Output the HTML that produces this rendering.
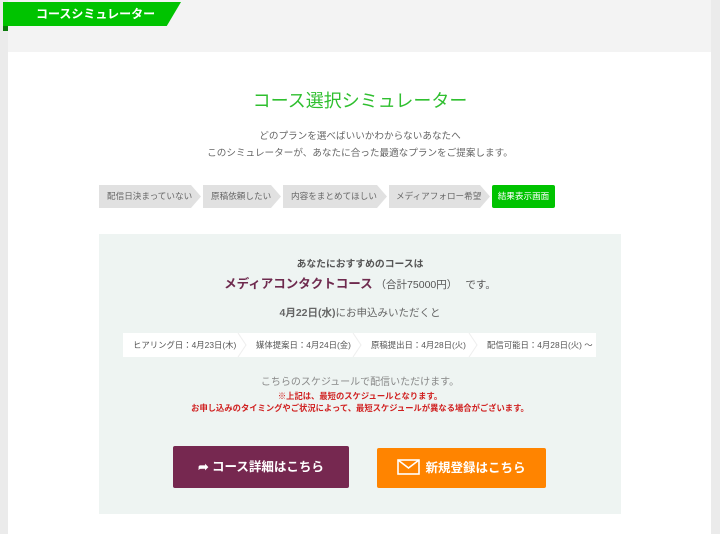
<!DOCTYPE html>
<html><head><meta charset="utf-8"><style>
*{margin:0;padding:0;box-sizing:border-box}
body{width:720px;height:534px;overflow:hidden;background:#ebebeb;font-family:"Liberation Sans","Noto Sans CJK JP",sans-serif;position:relative}
.abs{position:absolute;white-space:nowrap}
.hdr{left:8px;top:0;width:703px;height:52px;background:#f3f3f3}
.card{left:8px;top:52px;width:703px;height:482px;background:#fff}
.tab{left:3px;top:2px;width:178px;height:24px;background:#00c300;clip-path:polygon(0 0,100% 0,92% 100%,0 100%);color:#fff;font-weight:bold;font-size:12px;line-height:24px;padding-left:33px}
.tabshadow{left:3px;top:26px;width:5px;height:5px;background:#0a7a0a}
.title{left:0;width:720px;top:87px;text-align:center;color:#2fbf2f;font-size:18px}
.sub{left:0;width:720px;text-align:center;color:#666;font-size:9.6px}
.step{top:185px;height:23px;background:#e1e1e1;color:#666;font-size:8.6px;line-height:23px;padding-left:8px;clip-path:polygon(0 0,calc(100% - 10px) 0,100% 50%,calc(100% - 10px) 100%,0 100%)}
.panel{left:99px;top:234px;width:522px;height:280px;background:#eef4f2}
.c{left:99px;width:522px;text-align:center}
.sched{left:123px;top:333px;width:473px;height:24px;background:#fff;font-size:8.4px;color:#555;line-height:24px}
.sched span{position:absolute;top:0}
.btn{color:#fff;font-weight:bold;font-size:12.5px;text-align:center;border-radius:2px}
</style></head><body>
<div class="abs hdr"></div>
<div class="abs card"></div>
<div class="abs tabshadow"></div>
<div class="abs tab">コースシミュレーター</div>
<div class="abs title">コース選択シミュレーター</div>
<div class="abs sub" style="top:128px">どのプランを選べばいいかわからないあなたへ</div>
<div class="abs sub" style="top:145px">このシミュレーターが、あなたに合った最適なプランをご提案します。</div>
<div class="abs step" style="left:99px;width:102px">配信日決まっていない</div>
<div class="abs step" style="left:203px;width:78px">原稿依頼したい</div>
<div class="abs step" style="left:283px;width:104px">内容をまとめてほしい</div>
<div class="abs step" style="left:389px;width:101px;padding-left:7px">メディアフォロー希望</div>
<div class="abs" style="left:492px;top:185px;width:63px;height:23px;background:#00c300;color:#fff;font-size:8.6px;line-height:23px;text-align:center;border-radius:2px">結果表示画面</div>
<div class="abs panel"></div>
<div class="abs c" style="top:256px;font-size:9.8px;color:#555;font-weight:bold">あなたにおすすめのコースは</div>
<div class="abs c" style="top:273px;font-size:10.5px;color:#555"><b style="color:#6e2a4e;font-size:12.5px">メディアコンタクトコース</b> （合計75000円）　 です。</div>
<div class="abs c" style="top:305px;font-size:10.5px;color:#666"><b>4月22日(水)</b>にお申込みいただくと</div>
<div class="abs sched">
<span style="left:10px">ヒアリング日：4月23日(木)</span>
<span style="left:133px">媒体提案日：4月24日(金)</span>
<span style="left:248px">原稿提出日：4月28日(火)</span>
<span style="left:364px">配信可能日：4月28日(火) ～</span>
<svg class="abs" style="left:0;top:0" width="473" height="24"><g fill="none" stroke="#eee"><path d="M115 0l8 12-8 12M230 0l8 12-8 12M346 0l8 12-8 12"/></g></svg>
</div>
<div class="abs c" style="top:373px;font-size:10px;color:#888">こちらのスケジュールで配信いただけます。</div>
<div class="abs c" style="top:390px;font-size:8.3px;color:#d02020;font-weight:bold">※上記は、最短のスケジュールとなります。</div>
<div class="abs c" style="top:402px;font-size:8.3px;color:#d02020;font-weight:bold">お申し込みのタイミングやご状況によって、最短スケジュールが異なる場合がございます。</div>
<div class="abs btn" style="left:173px;top:446px;width:176px;height:42px;background:#762850;line-height:42px">➦ コース詳細はこちら</div>
<div class="abs btn" style="left:377px;top:448px;width:169px;height:40px;background:#ff8400;line-height:40px;padding-left:28px">新規登録はこちら</div>
<svg class="abs" style="left:397px;top:459px" width="23" height="16"><rect x="1" y="1" width="21" height="14" fill="none" stroke="#fff" stroke-width="1.6"/><path d="M1 1l10.5 8L22 1" fill="none" stroke="#fff" stroke-width="1.6"/></svg>
</body></html>
